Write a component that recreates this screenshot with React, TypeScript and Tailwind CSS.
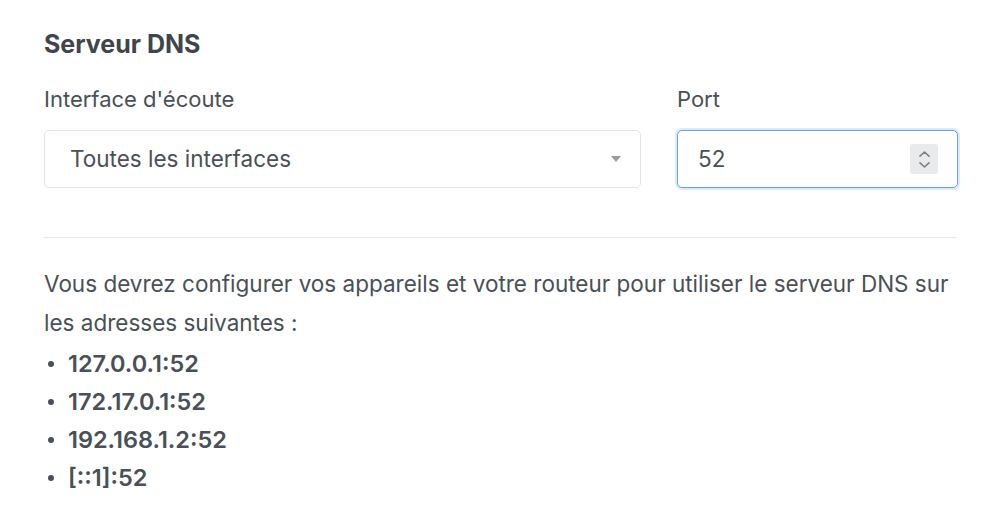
const ADDRESSES = ["127.0.0.1:52", "172.17.0.1:52", "192.168.1.2:52", "[::1]:52"];

export default function App() {
  return (
    <main
      className="min-h-[506px] w-[1000px] bg-white px-[44px] pt-[29px] text-[#495057]"
      style={{ fontFamily: "Inter, 'Noto Sans', sans-serif" }}
    >
      <h2 className="text-[25px] font-bold leading-[30px] text-[#3f454b]">Serveur DNS</h2>

      {/* Form row */}
      <div className="mt-[25px] grid grid-cols-[597px_281px] gap-x-[36px]">
        <div>
          <label className="block text-[22px] leading-[30px]">Interface d'écoute</label>
          <div className="mt-[16px] flex h-[58px] items-center justify-between rounded-[5px] border border-[#e2e4e7] bg-white pl-[25px] pr-[19px]">
            <span className="text-[22.5px]">Toutes les interfaces</span>
            <span className="h-0 w-0 border-x-[5.5px] border-t-[6px] border-x-transparent border-t-[#9a9da1]" />
          </div>
        </div>
        <div>
          <label className="block text-[22px] leading-[30px]">Port</label>
          <div className="mt-[16px] flex h-[58px] items-center justify-between rounded-[5px] border border-[#6d9fe3] bg-white pl-[20px] pr-[19px] shadow-[0_0_0_2px_rgba(120,170,235,0.25)]">
            <span className="text-[22.5px]">52</span>
            <span className="flex h-[30px] w-[28px] flex-col items-center justify-center gap-[5px] rounded-[2px] bg-[#e9eaec]">
              <svg width="11" height="6" viewBox="0 0 11 6" fill="none" stroke="#7d8186" strokeWidth="1.6" strokeLinecap="round" strokeLinejoin="round">
                <path d="M1 5.2 5.5 1 10 5.2" />
              </svg>
              <svg width="11" height="6" viewBox="0 0 11 6" fill="none" stroke="#7d8186" strokeWidth="1.6" strokeLinecap="round" strokeLinejoin="round">
                <path d="M1 0.8 5.5 5 10 0.8" />
              </svg>
            </span>
          </div>
        </div>
      </div>

      <hr className="mt-[49px] border-t border-[#e6e7e9]" />

      <p className="mt-[26px] text-[22.5px] leading-[39px]">
        Vous devrez configurer vos appareils et votre routeur pour utiliser le serveur DNS sur les adresses suivantes :
      </p>
      <ul className="mt-[3px]">
        {ADDRESSES.map((a) => (
          <li key={a} className="flex items-center text-[23.5px] font-semibold leading-[38px]">
            <span className="ml-[4px] mr-[14px] h-[6px] w-[6px] rounded-full bg-[#495057]" />
            {a}
          </li>
        ))}
      </ul>
    </main>
  );
}
